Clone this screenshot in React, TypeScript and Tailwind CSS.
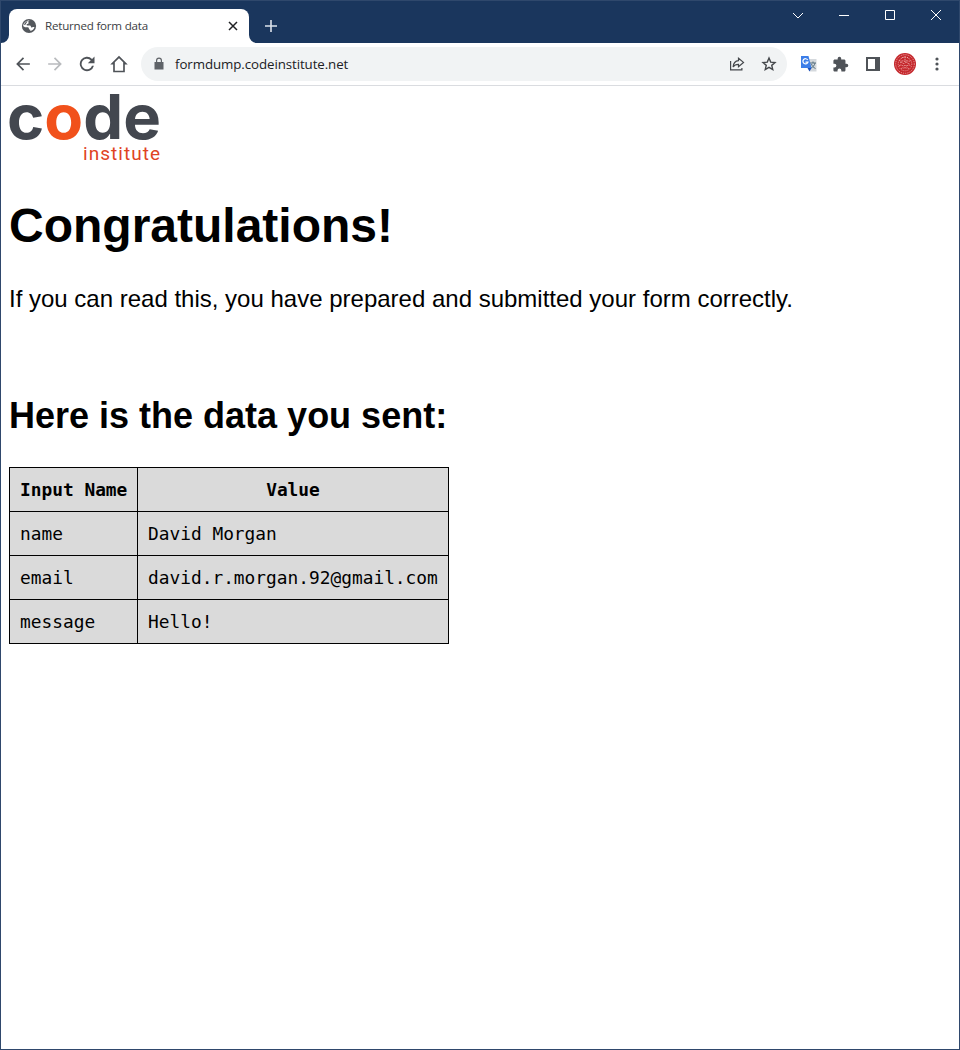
import type { ReactNode } from "react";

function Icon({ children, size = 24, className = "" }: { children: ReactNode; size?: number; className?: string }) {
  return (
    <svg width={size} height={size} viewBox="0 0 24 24" fill="currentColor" className={`shrink-0 ${className}`}>
      {children}
    </svg>
  );
}

function TitleBar() {
  return (
    <header className="flex h-[42px] items-end bg-[#1a365d]">
      <div className="relative ml-2 flex h-[34px] w-60 items-center rounded-t-lg bg-white pl-3 pr-2.5">
        <svg className="absolute -left-2 bottom-0" width="8" height="8" fill="#fff"><path d="M8 0v8H0a8 8 0 0 0 8-8z" /></svg>
        <svg className="absolute -right-2 bottom-0" width="8" height="8" fill="#fff"><path d="M0 0v8h8a8 8 0 0 1-8-8z" /></svg>
        <svg width="16" height="16" viewBox="0 0 16 16" className="shrink-0">
          <circle cx="8" cy="8" r="7.1" fill="#54585d" />
          <path d="M8.800 2.300c-1.300.5-1.800 1.400-1.300 2.200.4.7-.2 1.400-1.200 1.500-.9.100-1 1.100-.3 1.500h2.500c1 0 1.500.7 1.500 1.400 0 .6.900.7 1.500.4.700-.4 1.400-.4 2-.3-.5 2-2.200 3.700-4.200 4.100v-1.300c-.8 0-1.500-.6-1.500-1.500 0-.8-.7-1-1.500-1H4.800c-1 0-1.500-.8-2.600-1.100.1-2.800 2.300-5.600 6.600-5.900z" fill="#fff" />
          <path d="M3 7c.5-1.700 1.500-3 3.300-3.900.4.800-.4 1.300-.9 1.900-.6.600-.5 1.300-1 1.700z" fill="#54585d" />
        </svg>
        <span className="ml-2 grow whitespace-nowrap font-['Open_Sans',sans-serif] text-[11.6px] tracking-[-0.22px] text-[#3c4043]">Returned form data</span>
        <svg width="12" height="12" viewBox="0 0 12 12" stroke="#202124" strokeWidth="1.5"><path d="M2 2l8 8M10 2l-8 8" /></svg>
      </div>
      <svg className="mb-[11px] ml-4" width="12" height="12" stroke="#dce3ec" strokeWidth="1.6"><path d="M6 0v12M0 6h12" /></svg>
      <div className="ml-auto flex h-[42px] items-start pt-2 text-white">
        <svg width="46" height="12" fill="none" stroke="currentColor"><path d="M18 4l5 5 5-5" /></svg>
        <svg width="46" height="12" fill="none" stroke="currentColor"><path d="M18 6.5h10" /></svg>
        <svg width="46" height="12" fill="none" stroke="currentColor"><path d="M18.5 1.5h9v9h-9z" /></svg>
        <svg width="46" height="12" fill="none" stroke="currentColor"><path d="M18 1l10 10M28 1l-10 10" /></svg>
      </div>
    </header>
  );
}

function Toolbar() {
  return (
    <nav className="flex h-[43px] items-center border-b border-[#dadce0] pl-3 pr-3.5 text-[#4f5358]">
      <div className="flex gap-3">
        <Icon size={20}><path d="M20.2 11H7.600l5.700-5.700L11.900 3.900 3.800 12l8.100 8.100 1.400-1.400L7.600 13h12.600z" /></Icon>
        <Icon size={20} className="text-[#b9bbbe]"><path d="M3.800 11h12.600l-5.700-5.700 1.400-1.400 8.100 8.100-8.100 8.100-1.400-1.400 5.700-5.700H3.800z" /></Icon>
        <Icon size={20}><path d="M18.100 5.900A8.600 8.600 0 1 0 20.300 14H18a6.400 6.400 0 1 1-1.500-6.500L13 11h8V3z" /></Icon>
        <Icon size={20}><path d="M12 2 1.500 12.5H5V22h14v-9.500h3.500L12 2zm0 3 5 5V20H7v-10l5-5z" fillRule="evenodd" /></Icon>
      </div>
      <div className="ml-3 flex h-[34px] w-[646px] items-center rounded-full bg-[#f1f3f4] pl-3 pr-2.5">
        <svg width="12" height="14" viewBox="0 0 12 14" fill="#5f6368"><path d="M2 5h8.500v7.500H1.500V5zM3 5V3.500a3 3 0 0 1 6 0V5H7.800V3.500a1.800 1.800 0 0 0-3.600 0V5z" /></svg>
        <span className="ml-2.5 grow pt-0.5 font-['Open_Sans',sans-serif] text-[13.3px] tracking-[-0.08px] text-[#202124]">formdump.codeinstitute.net</span>
        <svg width="16" height="16" viewBox="0 0 16 16" fill="none" stroke="#44474b" strokeWidth="1.2">
          <path d="M1.600 5v8.900h11.300v-2M9.500 2.200l5 4.200-5 4.200V8.300C7 8.300 5.300 9 4.100 11c.3-3.700 2.200-6 5.400-6.300z" />
        </svg>
        <svg className="ml-4" width="16" height="16" viewBox="0 0 16 16" fill="none" stroke="#44474b" strokeWidth="1.400">
          <path d="M8 2.100l1.700 4 4.300.4-3.250 2.850 1 4.250L8 11.300l-3.750 2.300 1-4.250L2 6.500l4.300-.4z" />
        </svg>
      </div>
      <div className="ml-auto flex items-center">
        <svg width="18" height="18" viewBox="0 0 18 18">
          <path d="M7 4h9.500v12.500H10z" fill="#d5d9dd" />
          <path d="M10 8h6M13 6.500V8m2 0c-.5 2.500-2 4-4 5m.5-4c.5 2 2 3.500 4 4.500" stroke="#57717e" fill="none" />
          <path d="M1 1h7.500l3 12H1z" fill="#3c7ee8" />
          <path d="M7.500 13h4L9.500 16.500z" fill="#1c50bb" />
          <path d="M7.700 4.900A2.600 2.600 0 1 0 8 7.100H5.500" fill="none" stroke="#fff" strokeWidth="1.2" />
        </svg>
        <Icon size={17} className="ml-3.5 mr-px"><path d="M20.500 11H19V7c0-1.100-.9-2-2-2h-4V3.500a2.500 2.500 0 0 0-5 0V5H4c-1.100 0-2 .9-2 2v3.800h1.500a2.700 2.700 0 0 1 0 5.400H2V20c0 1.100.9 2 2 2h3.800v-1.500a2.700 2.700 0 0 1 5.400 0V22H17c1.100 0 2-.9 2-2v-4h1.500a2.500 2.500 0 0 0 0-5z" /></Icon>
        <svg className="ml-4" width="14" height="14" fillRule="evenodd" fill="currentColor"><path d="M0 0h14v14H0zM2 2v10h7V2z" /></svg>
        <svg className="ml-3.5" width="22" height="22" viewBox="0 0 22 22" fill="none">
          <circle cx="11" cy="11" r="11" fill="#c4272c" />
          <g stroke="#f3b6b4" strokeWidth=".8">
            <circle cx="11" cy="11" r="9.300" strokeDasharray="1.200 1" />
            <circle cx="11" cy="11" r="6.800" strokeDasharray="1 1" />
            <path strokeDasharray="2 .7" d="M5 7c2 3 4-1 6 2 2-3 4 1 6-2M6 10c2-2 3 2 5 0s3 2 5 0M5 13c3-3 4 2 6-1 2 3 3-2 6 1M7 16c2-3 3 1 4-2 1 3 2-1 4 2M11 3v5M9 4l-2 2m6-2 2 2" />
          </g>
        </svg>
        <svg className="ml-[13px]" width="16" height="16" fill="currentColor"><circle cx="8" cy="3" r="1.600" /><circle cx="8" cy="8" r="1.600" /><circle cx="8" cy="13" r="1.600" /></svg>
      </div>
    </nav>
  );
}

function Logo() {
  return (
    <svg width="151" height="70" viewBox="0 0 151 70" className="block overflow-visible">
      <text x="-2" y="44.800" textLength="154" lengthAdjust="spacingAndGlyphs" className="font-['Inter',sans-serif] text-[62px] font-bold" fill="#43474f">
        c<tspan fill="#f1511b">o</tspan>de
      </text>
      <text x="74" y="66" textLength="77" className="font-['Roboto',sans-serif] text-[19px]" fill="#df4323">institute</text>
    </svg>
  );
}

const rows = [
  ["name", "David Morgan"],
  ["email", "david.r.morgan.92@gmail.com"],
  ["message", "Hello!"],
];

export default function App() {
  return (
    <div className="flex h-[1050px] w-[960px] flex-col overflow-hidden border border-[#2f486c] bg-white">
      <TitleBar />
      <Toolbar />
      <main className="px-2 pt-2 font-['Liberation_Sans',sans-serif] text-2xl text-black">
        <Logo />
        <h1 className="mt-[34px] text-5xl font-bold leading-[55px]">Congratulations!</h1>
        <p className="mt-8 leading-[27px]">If you can read this, you have prepared and submitted your form correctly.</p>
        <h2 className="mt-[83px] text-4xl font-bold leading-[41px]">Here is the data you sent:</h2>
        <table className="mt-[31px] w-[440px] table-fixed border-collapse bg-[#dadada] font-['DejaVu_Sans_Mono',monospace] text-[17.83px] leading-[23px]">
          <colgroup><col className="w-32" /><col /></colgroup>
          <thead>
            <tr className="h-11">
              <th className="whitespace-nowrap border border-black px-2.5">Input Name</th>
              <th className="whitespace-nowrap border border-black px-2.5">Value</th>
            </tr>
          </thead>
          <tbody>
            {rows.map(([name, value]) => (
              <tr key={name} className="h-11">
                <td className="whitespace-nowrap border border-black px-2.5">{name}</td>
                <td className="whitespace-nowrap border border-black px-2.5">{value}</td>
              </tr>
            ))}
          </tbody>
        </table>
      </main>
    </div>
  );
}
